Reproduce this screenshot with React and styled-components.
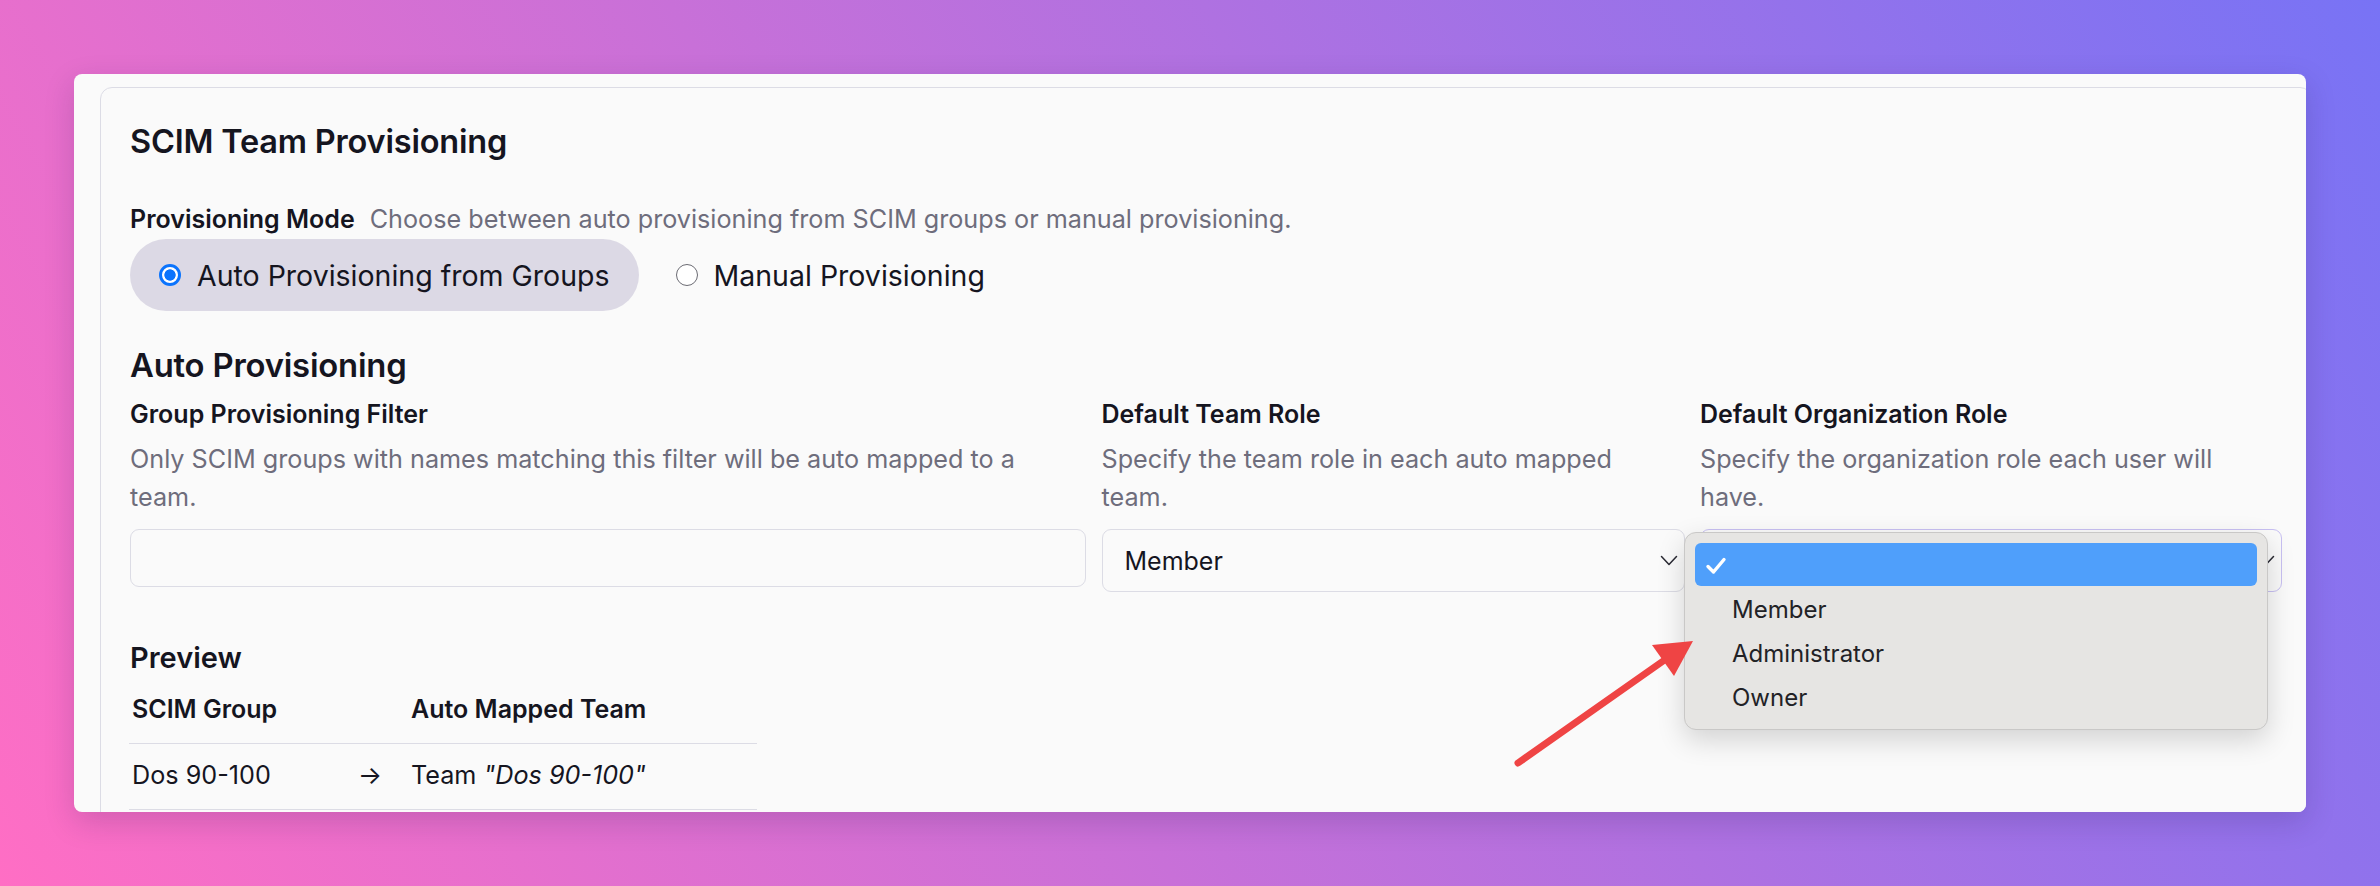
import React from "react";
import styled, { createGlobalStyle } from "styled-components";

const Global = createGlobalStyle`
  html, body { margin: 0; padding: 0; }
  body {
    width: 2380px;
    height: 886px;
    overflow: hidden;
    font-family: Inter, "Noto Sans", sans-serif;
    color: #15151f;
    background: linear-gradient(60deg, #ff6ec4 0%, #7873f5 100%);
  }
  * { box-sizing: border-box; }
`;

const Page = styled.div`
  position: relative;
  width: 2380px;
  height: 886px;
  padding: 74px;
`;

const Card = styled.div`
  position: relative;
  width: 2232px;
  height: 738px;
  background: #fafafa;
  border-radius: 8px;
  overflow: hidden;
  padding: 13px 0 0 26px;
  box-shadow: 0 10px 30px rgba(40, 20, 80, 0.18);
`;

const Panel = styled.div`
  width: 2212px;
  min-height: 800px;
  background: #fafafa;
  border: 1px solid #dcdce5;
  border-radius: 12px;
  padding: 36px 29px 0;
  display: flex;
  flex-direction: column;
`;

const Title = styled.h1`
  margin: 0;
  font-size: 32.5px;
  line-height: 36px;
  font-weight: 600;
  letter-spacing: -0.2px;
`;

const ModeRow = styled.div`
  margin-top: 44px;
  display: flex;
  align-items: baseline;
  gap: 15px;
`;

const Label = styled.div`
  font-size: 25px;
  line-height: 30px;
  font-weight: 600;
  color: #15151f;
`;

const Hint = styled.div`
  font-size: 25.2px;
  line-height: ${({ $lh }) => $lh || "30px"};
  color: #6e6d7c;
  padding-right: ${({ $pr }) => $pr || 0};
`;

const Options = styled.div`
  margin-top: 5px;
  display: flex;
  gap: 8px;
`;

const Option = styled.label`
  height: 72px;
  padding: 0 29px;
  display: flex;
  align-items: center;
  gap: 16px;
  border-radius: 36px;
  background: ${({ $checked }) => ($checked ? "#dcd9e5" : "transparent")};
  font-size: 28.5px;
  color: #15151f;
`;

const RadioDot = styled.span`
  width: 22px;
  height: 22px;
  border-radius: 50%;
  flex-shrink: 0;
  ${({ $checked }) =>
    $checked
      ? `
    border: 3px solid #0b74fd;
    background: radial-gradient(circle at center, #0b74fd 5.3px, #ffffff 6px);
  `
      : `
    border: 1.5px solid #6b6b73;
    background: #ffffff;
  `}
`;

const Heading = styled.h2`
  margin: 35px 0 0;
  font-size: 32.8px;
  line-height: 38px;
  font-weight: 600;
  letter-spacing: -0.2px;
`;

const Fields = styled.div`
  margin-top: 15px;
  display: grid;
  grid-template-columns: minmax(0, 956fr) minmax(0, 583fr) minmax(0, 582fr);
  column-gap: 15.5px;
  align-items: start;
`;

const Field = styled.div`
  position: relative;
  display: flex;
  flex-direction: column;
`;

const Desc = styled(Hint)`
  margin-top: 11px;
`;

const TextInput = styled.input`
  margin-top: 13px;
  height: 58px;
  width: 100%;
  border: 1.5px solid #dcdce5;
  border-radius: 9px;
  background: #fafafa;
  outline: none;
  font: inherit;
  font-size: 25px;
  padding: 0 22px;
`;

const SelectBox = styled.div`
  margin-top: 13px;
  height: 63px;
  width: 100%;
  border: 1.5px solid ${({ $focus }) => ($focus ? "#c8c0f2" : "#dcdce5")};
  border-radius: 9px;
  background: #fafafa;
  display: flex;
  align-items: center;
  justify-content: space-between;
  padding: 0 6px 0 22px;
  font-size: 25px;
  color: #15151f;
`;

const Chevron = () => (
  <svg width="18" height="11" viewBox="0 0 18 11" fill="none">
    <path d="M1.5 1.5 L9 9.5 L16.5 1.5" stroke="#2a2a33" strokeWidth="1.5" strokeLinecap="round" strokeLinejoin="round" />
  </svg>
);

const Menu = styled.div`
  position: absolute;
  left: -16px;
  bottom: -138px;
  width: 584px;
  padding: 10px 10px;
  background: #e6e5e3;
  border: 1px solid #c9c8c7;
  border-radius: 12px;
  box-shadow: 0 10px 28px rgba(0, 0, 0, 0.16);
  z-index: 5;
`;

const MenuItem = styled.div`
  height: ${({ $active }) => ($active ? "43px" : "44px")};
  margin-bottom: ${({ $active }) => ($active ? "1px" : "0")};
  border-radius: 6px;
  background: ${({ $active }) => ($active ? "#4f9ffb" : "transparent")};
  display: flex;
  align-items: center;
  padding-left: 37px;
  position: relative;
  font-size: 24px;
  color: #222226;
`;

const Check = styled.svg`
  position: absolute;
  left: 10px;
  top: 14px;
`;

const PreviewTitle = styled.h3`
  margin: 49px 0 0;
  font-size: 29px;
  line-height: 33px;
  font-weight: 600;
`;

const Table = styled.div`
  margin-top: 20px;
  width: 628px;
  margin-left: -1px;
`;

const Row = styled.div`
  display: grid;
  grid-template-columns: 229px 53px 1fr;
  align-items: center;
  border-bottom: 1.5px solid #dcdce5;
  padding: ${({ $head }) => ($head ? "0 0 19px" : "15.5px 0 19px")};
  font-size: ${({ $head }) => ($head ? "25px" : "25.2px")};
  line-height: 30px;
  font-weight: ${({ $head }) => ($head ? 600 : 400)};
`;

const Cell = styled.div`
  padding-left: ${({ $pl }) => $pl || 0};
  em { font-style: italic; }
`;

const Annotation = styled.svg`
  position: absolute;
  left: 1500px;
  top: 620px;
  z-index: 10;
`;

export default function App() {
  return (
    <>
      <Global />
      <Page>
        <Card>
          <Panel>
            <Title>SCIM Team Provisioning</Title>

            <ModeRow>
              <Label>Provisioning Mode</Label>
              <Hint>Choose between auto provisioning from SCIM groups or manual provisioning.</Hint>
            </ModeRow>
            <Options>
              <Option $checked>
                <RadioDot $checked />
                Auto Provisioning from Groups
              </Option>
              <Option>
                <RadioDot />
                Manual Provisioning
              </Option>
            </Options>

            <Heading>Auto Provisioning</Heading>
            <Fields>
              <Field>
                <Label>Group Provisioning Filter</Label>
                <Desc $lh="38px" $pr="40px">
                  Only SCIM groups with names matching this filter will be auto mapped to a team.
                </Desc>
                <TextInput />
              </Field>
              <Field>
                <Label>Default Team Role</Label>
                <Desc $lh="38px" $pr="24px">Specify the team role in each auto mapped team.</Desc>
                <SelectBox>
                  Member
                  <Chevron />
                </SelectBox>
              </Field>
              <Field>
                <Label>Default Organization Role</Label>
                <Desc $lh="38px" $pr="24px">Specify the organization role each user will have.</Desc>
                <SelectBox $focus>
                  <span />
                  <Chevron />
                </SelectBox>
                <Menu>
                  <MenuItem $active>
                    <Check width="22" height="18" viewBox="0 0 22 18" fill="none">
                      <path d="M3 9.5 L8.5 15 L19 2.5" stroke="#ffffff" strokeWidth="3.4" strokeLinecap="round" strokeLinejoin="round" />
                    </Check>
                  </MenuItem>
                  <MenuItem>Member</MenuItem>
                  <MenuItem>Administrator</MenuItem>
                  <MenuItem>Owner</MenuItem>
                </Menu>
              </Field>
            </Fields>

            <PreviewTitle>Preview</PreviewTitle>
            <Table>
              <Row $head>
                <Cell $pl="3px">SCIM Group</Cell>
                <Cell />
                <Cell>Auto Mapped Team</Cell>
              </Row>
              <Row>
                <Cell $pl="3px">Dos 90-100</Cell>
                <Cell>→</Cell>
                <Cell>
                  Team <em>"Dos 90-100"</em>
                </Cell>
              </Row>
            </Table>
          </Panel>
        </Card>
        <Annotation width="220" height="170" viewBox="0 0 220 170">
          <line x1="18" y1="143" x2="166" y2="39" stroke="#ef4444" strokeWidth="7" strokeLinecap="round" />
          <polygon points="193,21 152,25 174,56" fill="#ef4444" />
        </Annotation>
      </Page>
    </>
  );
}
